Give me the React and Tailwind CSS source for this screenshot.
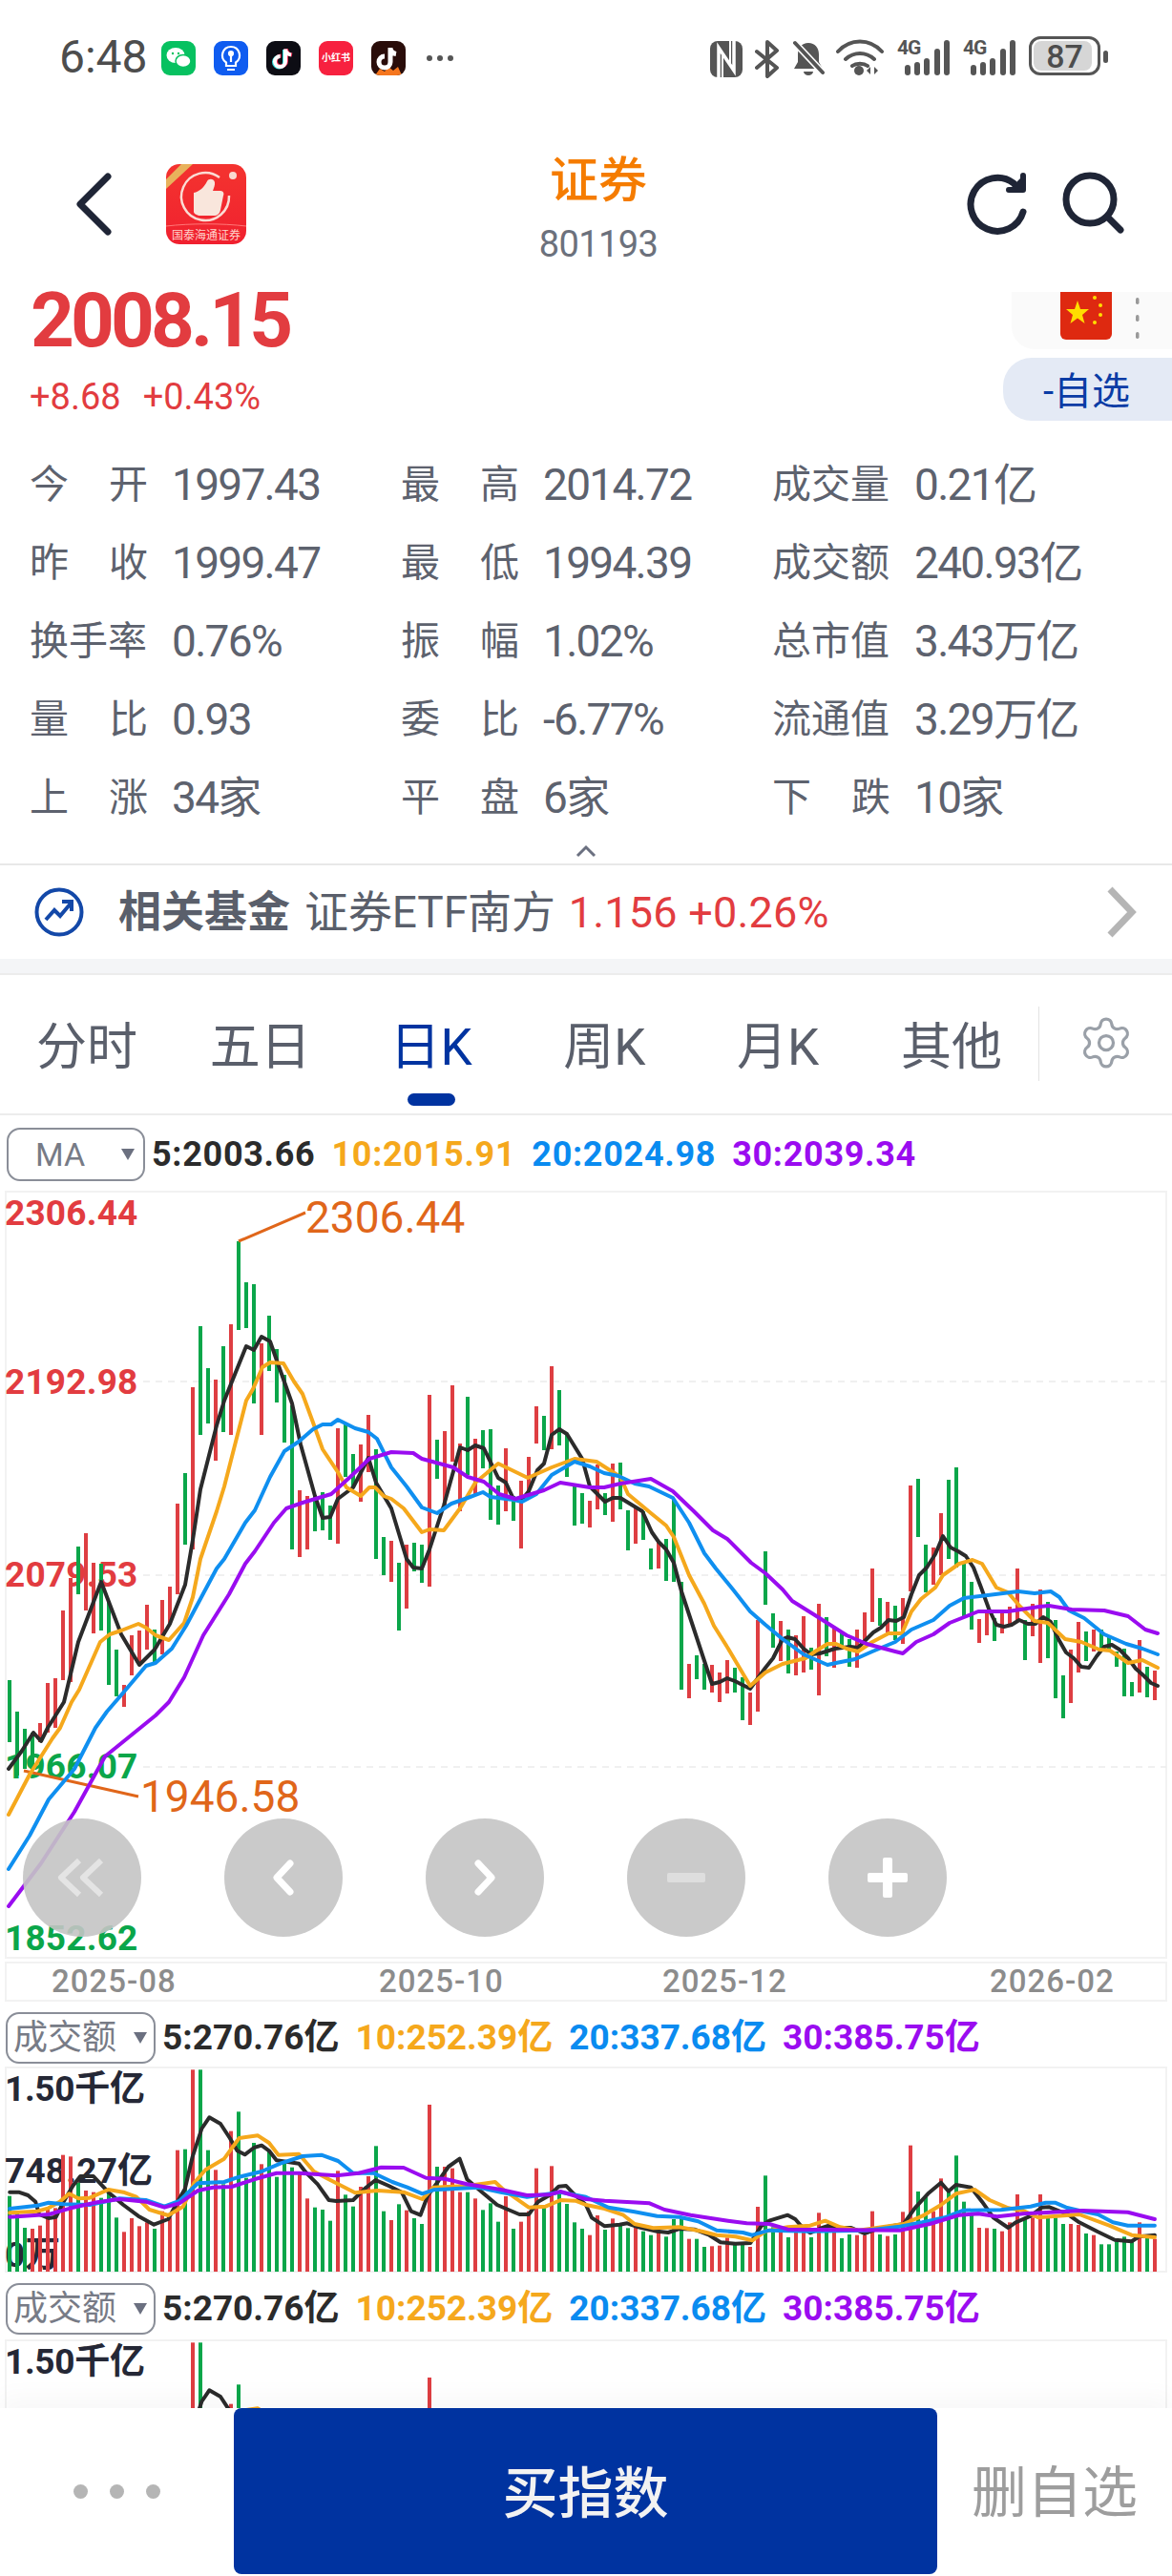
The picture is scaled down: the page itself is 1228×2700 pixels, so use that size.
import React from "react";
import { Settings } from "lucide-react";

const K = [["g",1760,1825],["g",1793,1860],["g",1811,1853],["g",1815,1850],["r",1805,1825],["r",1763,1815],["r",1758,1810],["r",1687,1760],["r",1653,1762],["g",1620,1670],["r",1606,1687],["r",1637,1711],["g",1638,1708],["g",1677,1765],["g",1728,1777],["r",1765,1788],["r",1713,1755],["r",1708,1743],["r",1681,1728],["g",1707,1742],["r",1676,1733],["r",1662,1700],["r",1575,1670],["g",1543,1618],["r",1453,1623],["g",1389,1503],["g",1433,1491],["r",1445,1530],["g",1410,1500],["r",1387,1503],["g",1300,1393],["g",1343,1391],["g",1345,1470],["r",1407,1503],["g",1378,1436],["g",1413,1469],["g",1440,1511],["g",1472,1623],["r",1561,1631],["r",1567,1623],["g",1567,1604],["g",1563,1603],["g",1577,1613],["r",1496,1617],["g",1492,1547],["g",1523,1557],["r",1513,1573],["r",1482,1542],["g",1518,1633],["g",1610,1650],["r",1614,1657],["g",1637,1708],["r",1618,1685],["g",1616,1646],["g",1618,1658],["r",1461,1662],["g",1508,1549],["r",1499,1580],["r",1451,1531],["r",1512,1583],["g",1463,1545],["r",1507,1567],["g",1498,1538],["g",1497,1592],["g",1556,1597],["r",1517,1583],["g",1567,1593],["r",1551,1622],["r",1526,1565],["r",1473,1512],["g",1483,1519],["r",1431,1518],["g",1456,1514],["g",1503,1547],["g",1557,1598],["g",1564,1596],["r",1572,1600],["r",1534,1581],["g",1564,1587],["r",1533,1594],["g",1532,1581],["g",1582,1624],["r",1580,1617],["g",1583,1613],["g",1622,1644],["r",1615,1643],["g",1612,1656],["g",1570,1657],["g",1657,1770],["r",1743,1779],["g",1734,1759],["g",1743,1770],["r",1744,1773],["r",1752,1783],["r",1739,1774],["g",1747,1773],["g",1757,1802],["r",1773,1807],["r",1697,1793],["g",1625,1681],["g",1690,1726],["r",1698,1740],["g",1707,1753],["r",1713,1755],["r",1693,1752],["g",1726,1749],["r",1680,1776],["g",1694,1735],["r",1705,1747],["g",1710,1724],["g",1717,1746],["r",1707,1747],["r",1689,1718],["r",1643,1699],["g",1674,1703],["r",1678,1710],["g",1682,1718],["r",1674,1722],["r",1556,1667],["g",1549,1610],["g",1618,1668],["r",1621,1660],["r",1585,1650],["g",1550,1633],["g",1537,1642],["g",1637,1693],["g",1657,1707],["r",1696,1721],["r",1690,1713],["g",1695,1719],["r",1690,1711],["r",1683,1701],["r",1643,1698],["g",1697,1739],["r",1680,1714],["r",1665,1742],["g",1678,1737],["g",1697,1779],["g",1755,1800],["r",1728,1784],["r",1699,1752],["g",1709,1740],["r",1707,1730],["g",1707,1730],["g",1713,1730],["g",1730,1746],["g",1727,1777],["g",1762,1777],["r",1718,1773],["g",1746,1778],["r",1750,1781]];

const MA5 = "9,1853 23,1834 35,1815 43,1824 50,1810 67,1783 82,1720 106,1657 127,1712 146,1744 162,1728 178,1701 194,1660 202,1613 210,1560 227,1493 235,1467 258,1410 266,1414 274,1400 283,1405 290,1425 306,1470 315,1513 330,1567 338,1590 346,1589 354,1570 370,1558 386,1527 394,1553 410,1580 426,1633 433,1642 442,1643 450,1623 465,1577 482,1516 490,1519 498,1514 507,1517 522,1548 530,1553 538,1570 546,1572 554,1562 563,1540 570,1533 578,1503 586,1497 594,1502 610,1528 618,1557 634,1573 642,1569 650,1569 673,1583 683,1605 690,1615 698,1623 706,1637 714,1667 746,1764 754,1762 762,1758 770,1761 786,1769 802,1747 810,1737 820,1717 825,1715 833,1717 842,1727 850,1733 859,1732 875,1727 891,1725 899,1726 907,1718 915,1710 923,1705 931,1697 939,1698 947,1694 955,1670 963,1650 971,1642 980,1628 988,1609 996,1621 1004,1625 1012,1630 1020,1642 1028,1663 1036,1685 1044,1702 1052,1704 1060,1702 1068,1697 1077,1701 1085,1701 1093,1694 1101,1699 1109,1717 1117,1731 1125,1737 1133,1746 1141,1747 1149,1735 1157,1725 1165,1723 1173,1728 1182,1737 1190,1748 1198,1755 1206,1763 1213,1766";
const MA10 = "9,1901 31,1859 55,1821 63,1810 75,1783 83,1770 105,1720 115,1712 127,1708 145,1701 153,1705 163,1713 177,1718 193,1700 202,1673 210,1633 227,1583 235,1557 258,1467 265,1455 275,1432 283,1427 297,1428 308,1447 317,1460 328,1490 338,1518 354,1542 363,1558 378,1567 387,1558 393,1558 402,1567 410,1570 423,1580 442,1605 450,1602 465,1603 482,1580 498,1553 522,1533 553,1548 578,1537 602,1528 625,1531 650,1547 658,1565 682,1585 698,1598 706,1610 722,1650 738,1680 748,1703 763,1727 786,1766 802,1752 820,1743 844,1737 854,1730 867,1722 876,1722 887,1727 899,1730 914,1720 931,1711 945,1711 955,1688 965,1675 980,1663 988,1650 1005,1638 1019,1634 1029,1638 1044,1663 1056,1668 1069,1683 1084,1698 1098,1700 1116,1717 1133,1720 1152,1728 1163,1729 1182,1742 1197,1739 1213,1747";
const MA20 = "9,1958 31,1923 51,1885 78,1853 100,1810 112,1793 125,1778 153,1745 163,1742 180,1727 195,1703 227,1643 235,1633 257,1595 267,1582 283,1547 298,1520 313,1510 328,1497 338,1492 347,1492 354,1487 372,1496 386,1500 395,1507 410,1537 418,1547 426,1557 442,1579 458,1585 473,1575 490,1569 506,1563 514,1568 538,1571 547,1573 562,1565 578,1545 602,1531 618,1536 633,1543 648,1546 665,1554 680,1557 705,1569 722,1595 738,1627 750,1643 768,1665 786,1688 802,1702 820,1717 842,1733 867,1744 876,1742 896,1738 914,1730 938,1720 955,1707 978,1697 995,1682 1010,1674 1035,1671 1067,1667 1084,1669 1101,1667 1110,1673 1120,1687 1136,1695 1157,1712 1180,1722 1197,1727 1213,1733";
const MA30 = "9,1997 43,1952 78,1898 110,1840 147,1810 163,1797 177,1783 193,1757 213,1713 240,1670 257,1638 267,1625 287,1595 300,1580 317,1574 347,1565 367,1547 387,1528 410,1521 433,1522 442,1528 475,1537 490,1547 507,1552 523,1565 540,1570 570,1561 587,1553 618,1558 633,1558 650,1554 682,1549 705,1562 727,1583 747,1603 762,1612 787,1637 802,1648 820,1665 830,1677 854,1692 887,1713 908,1722 938,1730 946,1732 960,1720 978,1712 995,1700 1025,1688 1035,1688 1056,1688 1089,1683 1099,1682 1123,1686 1157,1687 1182,1693 1200,1707 1213,1711";

const VT = [[ "g",422],["g",470],["g",522],["r",525],["r",515],["r",460],["r",460],["r",293],["r",298],["g",380],["r",405],["r",410],["g",428],["g",410],["g",490],["r",535],["r",492],["r",517],["r",505],["g",525],["r",470],["r",490],["r",278],["g",275],["r",25],["g",25],["g",278],["r",340],["g",385],["r",218],["g",157],["g",365],["g",255],["r",322],["g",280],["g",362],["g",320],["g",332],["r",345],["r",430],["g",458],["g",465],["g",500],["r",343],["g",418],["g",455],["r",393],["r",360],["g",265],["g",470],["r",498],["g",448],["r",467],["g",492],["g",510],["r",135],["g",330],["r",330],["r",335],["r",410],["g",410],["r",430],["g",466],["g",445],["g",503],["r",423],["g",525],["r",503],["r",470],["r",335],["g",450],["r",328],["g",410],["g",447],["g",505],["g",525],["r",545],["r",483],["g",528],["r",493],["g",510],["g",523],["r",520],["g",533],["g",545],["r",535],["g",550],["g",495],["g",490],["r",557],["g",557],["g",582],["r",580],["r",578],["r",553],["g",575],["g",572],["r",582],["r",456],["g",358],["g",520],["r",535],["g",552],["r",535],["r",530],["g",552],["r",475],["g",530],["r",535],["g",555],["g",543],["r",545],["r",545],["r",470],["g",543],["r",548],["g",543],["r",472],["r",263],["g",408],["g",425],["r",470],["r",367],["g",405],["g",295],["g",440],["g",480],["r",522],["r",523],["g",525],["r",533],["r",505],["r",417],["g",495],["r",490],["r",417],["g",490],["g",490],["g",510],["r",510],["r",513],["g",540],["r",545],["g",574],["g",574],["g",565],["g",550],["g",565],["r",505],["g",550],["r",557]];

const conv = (l, r) => {
  const out = [];
  const f = (s, ox) => s.trim().split(" ").forEach((p) => {
    const [x, y] = p.split(",").map(Number);
    out.push(`${(ox + x / 2.554).toFixed(1)},${(2160 + y / 3).toFixed(1)}`);
  });
  f(l, 0); f(r, 614);
  return out.join(" ");
};
const V5 = conv("26,410 50,410 75,420 95,440 105,480 130,492 150,488 170,440 195,390 215,360 250,360 290,410 330,450 370,485 412,512 450,495 475,440 495,400 515,300 540,210 560,175 590,195 615,240 635,280 655,292 680,270 700,263 720,280 740,310 770,315 800,320 820,350 850,385 880,435 900,438 945,435 975,400 1005,372 1040,390 1075,410 1100,470 1125,482 1145,420 1170,380 1200,330 1230,305 1250,370 1290,410 1330,450 1360,465 1390,480 1415,480 1440,440 1470,420 1495,392 1515,390 1535,415 1568,450",
  "15,490 50,517 90,512 110,508 140,520 190,533 220,537 250,525 290,527 330,545 360,568 400,572 440,570 470,515 490,500 540,482 560,495 575,515 600,538 625,525 650,515 680,522 710,522 745,540 780,525 850,510 880,460 915,415 950,380 970,407 990,387 1030,395 1060,440 1090,490 1130,522 1150,505 1190,485 1220,458 1240,457 1290,480 1320,505 1370,535 1415,560 1460,565 1480,550 1522,545");
const V10 = conv("26,475 100,470 130,460 160,440 185,415 210,430 240,428 290,402 330,410 365,425 400,465 450,483 490,455 520,380 550,340 600,305 640,240 690,232 720,255 745,293 800,290 840,345 880,370 950,412 1010,405 1080,410 1130,432 1160,395 1250,390 1325,378 1345,400 1415,458 1460,455 1500,435 1540,437 1568,450",
  "50,462 100,482 130,510 180,523 250,520 310,533 350,545 400,550 445,562 480,533 540,520 600,515 640,500 680,520 730,530 850,510 900,485 950,450 990,415 1040,402 1080,435 1130,460 1170,468 1210,490 1320,480 1400,515 1460,545 1522,552");
const V20 = conv("26,462 100,452 130,443 170,448 240,450 320,430 390,435 440,455 480,438 530,382 600,378 640,362 700,345 750,320 810,297 860,293 905,312 945,350 1000,350 1050,378 1090,395 1130,415 1160,403 1280,395 1340,410 1410,425 1500,410 1568,425",
  "60,458 130,472 190,485 250,488 300,502 350,530 420,537 445,545 490,530 600,533 750,530 840,518 900,505 960,490 1010,467 1110,466 1190,455 1230,443 1255,443 1285,458 1320,468 1370,480 1410,505 1450,515 1522,515");
const V30 = conv("26,488 130,480 190,460 260,442 320,432 390,440 440,458 480,445 530,405 570,395 620,393 680,370 740,350 800,350 900,358 960,350 1020,332 1080,333 1140,365 1190,368 1250,385 1340,402 1410,420 1470,418 1500,408 1568,432",
  "50,437 170,445 210,465 280,482 380,500 430,508 490,510 540,527 640,528 840,530 920,510 1000,482 1050,478 1100,487 1170,478 1330,468 1450,473 1522,495");

const RED = "#de3e42", GREEN = "#0ba64a";
const line = (p, c) => <polyline points={p} fill="none" stroke={c} strokeWidth="4" strokeLinejoin="round" strokeLinecap="round" />;

const STATS = [
  [["今", "开"], "1997.43"], [["最", "高"], "2014.72"], [["成交量"], "0.21亿"],
  [["昨", "收"], "1999.47"], [["最", "低"], "1994.39"], [["成交额"], "240.93亿"],
  [["换手率"], "0.76%"], [["振", "幅"], "1.02%"], [["总市值"], "3.43万亿"],
  [["量", "比"], "0.93"], [["委", "比"], "-6.77%"], [["流通值"], "3.29万亿"],
  [["上", "涨"], "34家"], [["平", "盘"], "6家"], [["下", "跌"], "10家"],
];

function Caret() {
  return <svg width="16" height="14" viewBox="0 0 16 14"><path d="M1 1h14L8 13z" fill="#6b7080" /></svg>;
}

function IndicatorRow({ name, vals, big }) {
  return (
    <div className={big ? "flex items-start h-[79px] pt-[13px] pl-[7px]" : "flex items-start h-[70px] pt-[11px] pl-[6px]"}>
      {big ? (
        <div className="w-[145px] h-[56px] border-2 border-[#8a8e98] rounded-[14px] flex items-center justify-between pl-[28px] pr-[8px]">
          <span className="text-[34px] text-[#777b86]">{name}</span>
          <Caret />
        </div>
      ) : (
        <div className="w-[157px] h-[54px] border-2 border-[#8a8e98] rounded-[14px] flex items-center justify-between pl-[6px] pr-[6px]">
          <span className="text-[36px] text-[#777b86] whitespace-nowrap leading-none">{name}</span>
          <Caret />
        </div>
      )}
      <div className={big ? "flex ml-[7px] h-[56px] items-center gap-[17px] text-[36px] font-bold tracking-[0.7px] whitespace-nowrap" : "flex ml-[7px] h-[54px] items-center gap-[17px] text-[37px] font-bold tracking-[0px] whitespace-nowrap"}>
        <span className="text-[#2b2b2b]">{vals[0]}</span>
        <span className="text-[#f5a81c]">{vals[1]}</span>
        <span className="text-[#0a8bf0]">{vals[2]}</span>
        <span className="text-[#9a0cf0]">{vals[3]}</span>
      </div>
    </div>
  );
}

function VolPanel({ clipped }) {
  return (
    <div className="relative mx-[5px] h-[216px] shadow-[inset_0_0_0_2px_#f2f2f2] text-[37px] font-bold text-[#252836] leading-none">
      <span className="absolute left-0 top-[5px] tracking-[-0.3px]">1.50千亿</span>
      {!clipped && <span className="absolute left-0 top-[91px] tracking-[0.2px]">748.27亿</span>}
      {!clipped && <span className="absolute left-0 top-[179px]">0万</span>}
      <svg className="absolute left-0 top-0" width="1218" height="216" viewBox="5 2165 1218 216">
        {VT.map(([c, t], i) => (
          <rect key={i} x={8 + 8 * i} y={2160 + t / 3} width="4" height={2380 - (2160 + t / 3)} fill={c === "r" ? RED : GREEN} />
        ))}
        {line(V5, "#2b2b2b")}
        {line(V10, "#f5a81c")}
        {line(V20, "#0f8ff0")}
        {line(V30, "#9a0cf0")}
      </svg>
    </div>
  );
}

function RoundBtn({ children }) {
  return <div className="w-[124px] h-[124px] rounded-full bg-[#c4c4c4]/90 flex items-center justify-center">{children}</div>;
}

function Stat({ label, value }) {
  return (
    <div className="flex items-center h-[82px]">
      <div className="w-[124px] flex justify-between text-[41px] leading-none whitespace-nowrap">
        {label.map((t) => <span key={t}>{t}</span>)}
      </div>
      <span className="ml-[25px] text-[46px] tracking-[-1.7px] whitespace-nowrap leading-none">{value}</span>
    </div>
  );
}

const bi = "w-[36px] h-[36px] rounded-[9px] shrink-0 overflow-hidden flex items-center justify-center";

export default function App() {
  return (
    <div className="w-[1228px] h-[2700px] overflow-hidden bg-white font-['Roboto','Noto_Sans_CJK_SC',sans-serif]">
      <div className="h-[2524px] overflow-hidden">
        {/* status bar */}
        <div className="h-[120px] flex items-start pt-[40px] pl-[62px] text-[#4d4d4d]">
          <span className="text-[48px] leading-[40px] w-[107px]">6:48</span>
          <div className={bi + " bg-[#07c160] mt-[3px]"}>
            <svg width="30" height="28" viewBox="0 0 30 28"><ellipse cx="12" cy="11" rx="9.5" ry="8" fill="#fff" /><ellipse cx="20" cy="17" rx="8" ry="6.6" fill="#fff" stroke="#07c160" strokeWidth="1.5" /><circle cx="9" cy="9" r="1.2" fill="#07c160" /><circle cx="15" cy="9" r="1.2" fill="#07c160" /></svg>
          </div>
          <div className={bi + " bg-[#0f5cf0] mt-[3px] ml-[19px]"}>
            <svg width="26" height="30" viewBox="0 0 26 30" fill="none" stroke="#fff" strokeWidth="2.2"><path d="M13 3a9 9 0 0 0-5 16.5V23h10v-3.500A9 9 0 0 0 13 3z" /><path d="M9 27h8M13 11v8" /><circle cx="13" cy="10" r="2" fill="#fff" /></svg>
          </div>
          <div className={bi + " bg-[#0d0d14] mt-[3px] ml-[19px]"}>
            <svg width="28" height="28" viewBox="0 0 28 28" fill="none" strokeWidth="4"><path d="M15 5v13a5.500 5.500 0 1 1-5.500-5.500" stroke="#35e0e0" /><path d="M17 4v13a5.500 5.500 0 1 1-5.500-5.500M17 5c.5 3 3 5 6 5.500" stroke="#f5305a" /><path d="M16 4.500v13a5.500 5.500 0 1 1-5.500-5.500M16 5c.5 3 3 5 6 5.500" stroke="#fff" /></svg>
          </div>
          <div className={bi + " bg-[#f7213f] mt-[3px] ml-[19px]"}>
            <span className="text-[10px] font-bold text-white whitespace-nowrap leading-none">小红书</span>
          </div>
          <div className={bi + " bg-[#2a0d0a] mt-[3px] ml-[19px] relative"}>
            <svg width="36" height="36" viewBox="0 0 36 36" fill="none"><path d="M4 36l5-7 5 3 4-5 5 4 5-4 4 9z" fill="#f5761e" /><path d="M20 7v15a6 6 0 1 1-6-6M20 8c.5 3 3 5 6 5.500" stroke="#fff" strokeWidth="5" /></svg>
          </div>
          <svg className="ml-[21px] mt-[17px]" width="30" height="8" viewBox="0 0 30 8" fill="#555"><circle cx="4" cy="4" r="3" /><circle cx="15" cy="4" r="3" /><circle cx="26" cy="4" r="3" /></svg>

          <div className="ml-auto flex items-start pr-[67px] -mt-[1px]">
            <svg width="34" height="38" viewBox="0 0 34 38" className="mt-[4px]"><rect width="34" height="38" rx="8" fill="#555" /><path d="M9 38V7l16 24V0" fill="none" stroke="#fff" strokeWidth="3.500" /><path d="M13 14v24M21 24V0" stroke="#fff" strokeWidth="2" fill="none" /></svg>
            <svg width="26" height="40" viewBox="0 0 26 40" fill="none" stroke="#555" strokeWidth="4" className="ml-[13px] mt-[3px]" strokeLinejoin="round" strokeLinecap="round"><path d="M2 12l21 17-10 9V2l10 9L2 29" /></svg>
            <svg width="34" height="38" viewBox="0 0 34 38" className="ml-[13px] mt-[3px]"><path d="M17 3c7 0 11 5 11 12v8l4 7H2l4-7v-8C6 8 10 3 17 3z" fill="#555" /><path d="M12 33h10a5 4 0 0 1-10 0z" fill="#555" /><path d="M2 2l30 32" stroke="#fff" strokeWidth="7" /><path d="M3 3l29 31" stroke="#555" strokeWidth="4" strokeLinecap="round" /></svg>
            <svg width="50" height="40" viewBox="0 0 50 40" fill="none" stroke="#555" strokeWidth="4" strokeLinecap="round" className="ml-[12px] mt-[1px]"><path d="M2 14c13-14 33-14 46 0M10 22c9-8 21-8 30 0M17 29c4-3 12-3 16 0" /><circle cx="24" cy="34" r="5" fill="#555" stroke="none" /><path d="M36 30l-4 4 4 4zM40 30l4 4-4 4z" fill="#555" stroke="none" /></svg>
            {[0, 1].map((k) => (
              <div key={k} className="relative w-[55px] h-[40px] ml-[14px] mt-[1px]">
                <span className="absolute left-0 top-[0px] text-[21px] font-bold leading-[21px] text-[#555] tracking-[-1px]">4G</span>
                <svg className="absolute left-0 top-0" width="55" height="40" viewBox="0 0 55 40" fill="#555"><rect x="8" y="28" width="6" height="11" rx="3" /><rect x="18" y="25" width="6" height="14" rx="3" /><rect x="28" y="21" width="6" height="18" rx="3" /><rect x="39" y="11" width="6" height="28" rx="3" /><rect x="49" y="2" width="6" height="37" rx="3" /></svg>
              </div>
            ))}
            <div className="ml-[14px] w-[75px] h-[41px] border-[3px] border-[#555] rounded-[12px] relative overflow-hidden flex items-center justify-center -mt-[1px]">
              <div className="absolute left-[2px] top-[2px] bottom-[2px] w-[61px] rounded-[8px] bg-[#d6d6d6]" />
              <span className="relative text-[34px] font-medium leading-none text-[#4d4d4d]">87</span>
            </div>
            <div className="ml-[3px] mt-[14px] w-[5px] h-[13px] rounded-[3px] bg-[#555]" />
          </div>
        </div>

        {/* header */}
        <div className="h-[186px] flex items-start">
          <svg className="ml-[78px] mt-[60px]" width="40" height="68" viewBox="0 0 40 68" fill="none" stroke="#1f2536" strokeWidth="7" strokeLinecap="round" strokeLinejoin="round"><path d="M35 5L6 34l29 29" /></svg>
          <div className="ml-[56px] mt-[52px] w-[84px] h-[84px] rounded-[14px] bg-gradient-to-b from-[#f4332f] to-[#f0202f] flex flex-col items-center relative overflow-hidden">
            <svg width="84" height="84" viewBox="0 0 84 84" className="absolute left-0 top-0"><path d="M0 16L16 0h12L0 26z" fill="#e8b25c" /><path d="M56 14A25 25 0 1 0 66 33" fill="none" stroke="#fbdcd4" strokeWidth="2.500" /><path d="M29 30c6-1 11-6 14-12 1.500-3 7-3 8 1 .5 3-1 6-2 9h8c3 0 4 3 3 5l-3 15c-1 4-3 6-7 6H36c-3 0-7-2-7-4z" fill="#f9e6dc" /><circle cx="70" cy="12" r="4" fill="#f9d9d0" /><path d="M0 65c25-3 59-3 84 0" stroke="#f77" fill="none" /></svg>
            <span className="absolute bottom-[3px] text-[12px] leading-none text-[#ffd4cc] whitespace-nowrap">国泰海通证券</span>
          </div>
          <div className="ml-[299px] w-[140px] flex flex-col items-center">
            <span className="mt-[41px] text-[51px] leading-[58px] font-medium text-[#f57c00]">证券</span>
            <span className="mt-[17px] text-[38px] leading-[40px] tracking-[-0.6px] text-[#6c717c]">801193</span>
          </div>
          <svg className="ml-[315px] mt-[58px]" width="66" height="70" viewBox="0 0 66 70" fill="none" stroke="#1f2536" strokeWidth="7" strokeLinecap="round"><path d="M60 44A28 28 0 1 1 50 14" /><path d="M60 6v15H45" strokeWidth="6" fill="#1f2536" stroke="#1f2536" strokeLinejoin="round" /></svg>
          <svg className="ml-[35px] mt-[60px]" width="66" height="66" viewBox="0 0 66 66" fill="none" stroke="#1f2536" strokeWidth="7" strokeLinecap="round"><circle cx="29" cy="29" r="25" /><path d="M47 47l14 14" /></svg>
        </div>

        {/* price */}
        <div className="h-[161px] flex justify-between">
          <div className="pl-[32px]">
            <div className="text-[80px] font-bold leading-[60px] text-[#e23c40] tracking-[-3.900px]">2008.15</div>
            <div className="mt-[32px] flex gap-[23px] -ml-[1px] text-[38px] leading-[36px] text-[#e23c40] tracking-[0px]">
              <span>+8.68</span><span>+0.43%</span>
            </div>
          </div>
          <div className="w-[178px] flex flex-col items-end">
            <div className="w-[168px] h-[60px] bg-[#fafafa] rounded-bl-[24px] flex items-start">
              <svg className="ml-[51px]" width="54" height="50" viewBox="0 0 54 50"><path d="M0 0h54v44a6 6 0 0 1-6 6H6a6 6 0 0 1-6-6z" fill="#de2910" /><path d="M18 9l3 9 9 0-7 6 2.500 9-7.500-5.500L10.500 33l2.500-9-7-6 9 0z" fill="#ffde00" /><circle cx="36" cy="6" r="2" fill="#ffde00" /><circle cx="42" cy="14" r="2" fill="#ffde00" /><circle cx="42" cy="24" r="2" fill="#ffde00" /><circle cx="36" cy="32" r="2" fill="#ffde00" /></svg>
              <svg className="ml-[24px] mt-[6px]" width="6" height="46" viewBox="0 0 6 46" fill="#999"><rect x="1" y="0" width="3.500" height="7" rx="1.700" /><rect x="1" y="18" width="3.500" height="7" rx="1.700" /><rect x="1" y="36" width="3.500" height="7" rx="1.700" /></svg>
            </div>
            <div className="mt-[9px] w-[177px] h-[66px] bg-[#e4eaf5] rounded-l-[30px] flex items-center pl-[42px] pt-[6px] text-[40px] text-[#0a3ca5] leading-none">-自选</div>
          </div>
        </div>

        {/* stats */}
        <div className="grid grid-cols-[389px_389px_1fr] pl-[31px] text-[#5d626e]">
          {STATS.map(([l, v]) => <Stat key={l.join("") + v} label={l} value={v} />)}
        </div>
        <div className="h-[30px] flex justify-center pt-[8px] border-b-2 border-[#e8e8e8]">
          <svg width="22" height="14" viewBox="0 0 22 14" fill="none" stroke="#6b7080" strokeWidth="3"><path d="M2 12l9-9 9 9" /></svg>
        </div>

        {/* fund row */}
        <div className="h-[98px] flex items-center pl-[36px]">
          <svg width="52" height="52" viewBox="0 0 52 52" fill="none"><circle cx="26" cy="26" r="23.500" stroke="#1348a8" strokeWidth="4" /><path d="M12 34l9-10 6 6 11-13" stroke="#1348a8" strokeWidth="4" /><path d="M29 15h10v10" stroke="#1348a8" strokeWidth="4" /></svg>
          <span className="ml-[36px] text-[45px] font-bold text-[#5a5f6b] whitespace-nowrap leading-none">相关基金</span>
          <span className="ml-[15px] text-[46px] tracking-[-0.1px] text-[#5a5f6b] whitespace-nowrap leading-none">证券ETF南方</span>
          <span className="ml-[14px] text-[45px] text-[#e23c40] whitespace-nowrap leading-none tracking-[0.2px]">1.156 +0.26%</span>
          <svg className="ml-auto mr-[36px]" width="34" height="54" viewBox="0 0 34 54" fill="none" stroke="#b5b5b5" strokeWidth="7"><path d="M5 3l23 24L5 51" /></svg>
        </div>
        <div className="h-[15px] bg-[#f4f5f7]" />

        {/* tabs */}
        <div className="h-[149px] border-y-2 border-[#ececec] flex items-start text-[#5a5f6b]">
          <div className="w-[1088px] flex items-center h-[150px] -mt-[2px] pt-[6px]">
            {["分时", "五日", "日K", "周K", "月K", "其他"].map((t) => (
              <div key={t} className={t === "日K" ? "flex-1 text-center text-[53px] leading-none text-[#0033a0] relative -ml-[3px]" : "flex-1 text-center text-[53px] leading-none"}>
                {t}
                {t === "日K" && <div className="absolute left-[66px] top-[74px] w-[50px] h-[13px] rounded-full bg-[#0033a0]" />}
              </div>
            ))}
          </div>
          <div className="w-px h-[78px] mt-[33px] bg-[#e3e3e3]" />
          <Settings className="ml-[40px] mt-[41px]" size={60} strokeWidth={1.3} color="#9aa0a8" />
        </div>

        <IndicatorRow big name="MA" vals={["5:2003.66", "10:2015.91", "20:2024.98", "30:2039.34"]} />

        {/* price chart */}
        <div className="relative mx-[5px] h-[805px] shadow-[inset_0_0_0_2px_#f2f2f2] text-[37px] font-bold leading-none">
          <span className="absolute left-0 top-[5px] text-[#e23c40] tracking-[0.2px]">2306.44</span>
          <span className="absolute left-0 top-[182px] text-[#e23c40] tracking-[0.2px]">2192.98</span>
          <span className="absolute left-0 top-[384px] text-[#e23c40] tracking-[0.2px]">2079.53</span>
          <span className="absolute left-0 top-[585px] text-[#0ba64a] tracking-[0.2px]">1966.07</span>
          <span className="absolute left-0 top-[765px] text-[#0ba64a] tracking-[0.2px]">1852.62</span>
          <span className="absolute left-[315px] top-[5px] text-[46px] font-normal text-[#e0661a]">2306.44</span>
          <span className="absolute left-[142px] top-[612px] text-[46px] font-normal text-[#e0661a]">1946.58</span>
          <svg className="absolute left-0 top-0" width="1218" height="805" viewBox="5 1247 1218 805">
            {[1447, 1650, 1851].map((y) => <line key={y} x1="150" x2="1222" y1={y} y2={y} stroke="#ececec" strokeWidth="1.500" strokeDasharray="7 6" />)}
            {K.map(([c, t, b], i) => <rect key={i} x={8 + 8 * i} y={t} width="4" height={b - t} fill={c === "r" ? RED : GREEN} />)}
            <path d="M250 1300L320 1270M25 1855L145 1882" stroke="#e0661a" strokeWidth="3" fill="none" />
            {line(MA5, "#2b2b2b")}
            {line(MA10, "#f5a81c")}
            {line(MA20, "#0f8ff0")}
            {line(MA30, "#9a0cf0")}
          </svg>
          <div className="absolute left-[19px] top-[658px] w-[968px] flex justify-between">
            <RoundBtn><svg width="56" height="44" viewBox="0 0 56 44" fill="none" stroke="#e4e4e4" strokeWidth="6" strokeLinejoin="round"><path d="M25 4L6 22l19 18M48 4L29 22l19 18" /></svg></RoundBtn>
            <RoundBtn><svg width="24" height="40" viewBox="0 0 24 40" fill="none" stroke="#fff" strokeWidth="7" strokeLinecap="round" strokeLinejoin="round"><path d="M19 5L5 20l14 15" /></svg></RoundBtn>
            <RoundBtn><svg width="24" height="40" viewBox="0 0 24 40" fill="none" stroke="#fff" strokeWidth="7" strokeLinecap="round" strokeLinejoin="round"><path d="M5 5l14 15L5 35" /></svg></RoundBtn>
            <RoundBtn><div className="w-[40px] h-[10px] rounded-[2px] bg-[#dedede]" /></RoundBtn>
            <RoundBtn><svg width="42" height="42" viewBox="0 0 42 42" fill="#fff"><rect x="0" y="16" width="42" height="10" rx="2" /><rect x="16" y="0" width="10" height="42" rx="2" /></svg></RoundBtn>
          </div>
        </div>

        {/* x axis */}
        <div className="mt-[3px] mx-[5px] h-[42px] shadow-[inset_0_0_0_2px_#f2f2f2] text-[33px] font-medium text-[#8c8c8c] leading-none relative">
          <span className="absolute left-[49px] top-[4px] tracking-[1px]">2025-08</span>
          <span className="absolute left-[392px] top-[4px] tracking-[1px]">2025-10</span>
          <span className="absolute left-[689px] top-[4px] tracking-[1px]">2025-12</span>
          <span className="absolute left-[1032px] top-[4px] tracking-[1px]">2026-02</span>
        </div>

        <div className="h-[68px]">
          <IndicatorRow name="成交额" vals={["5:270.76亿", "10:252.39亿", "20:337.68亿", "30:385.75亿"]} />
        </div>
        <VolPanel />
        <IndicatorRow name="成交额" vals={["5:270.76亿", "10:252.39亿", "20:337.68亿", "30:385.75亿"]} />
        <VolPanel clipped />
      </div>

      {/* footer */}
      <div className="h-[176px] flex items-start bg-white shadow-[0_-12px_24px_rgba(0,0,0,0.03)] relative">
        <div className="w-[245px] h-[174px] flex items-center justify-center gap-[23px]">
          <div className="w-[15px] h-[15px] rounded-full bg-[#b5b5b5]" />
          <div className="w-[15px] h-[15px] rounded-full bg-[#b5b5b5]" />
          <div className="w-[15px] h-[15px] rounded-full bg-[#b5b5b5]" />
        </div>
        <div className="w-[737px] h-[174px] rounded-[8px] bg-[#0033a0] flex items-center justify-center pt-[6px] text-[58px] font-medium text-[#f2f2f2] leading-none">买指数</div>
        <div className="flex-1 h-[174px] flex items-center pl-[36px] pt-[4px] text-[58px] text-[#9d9d9d] leading-none">删自选</div>
      </div>
    </div>
  );
}
